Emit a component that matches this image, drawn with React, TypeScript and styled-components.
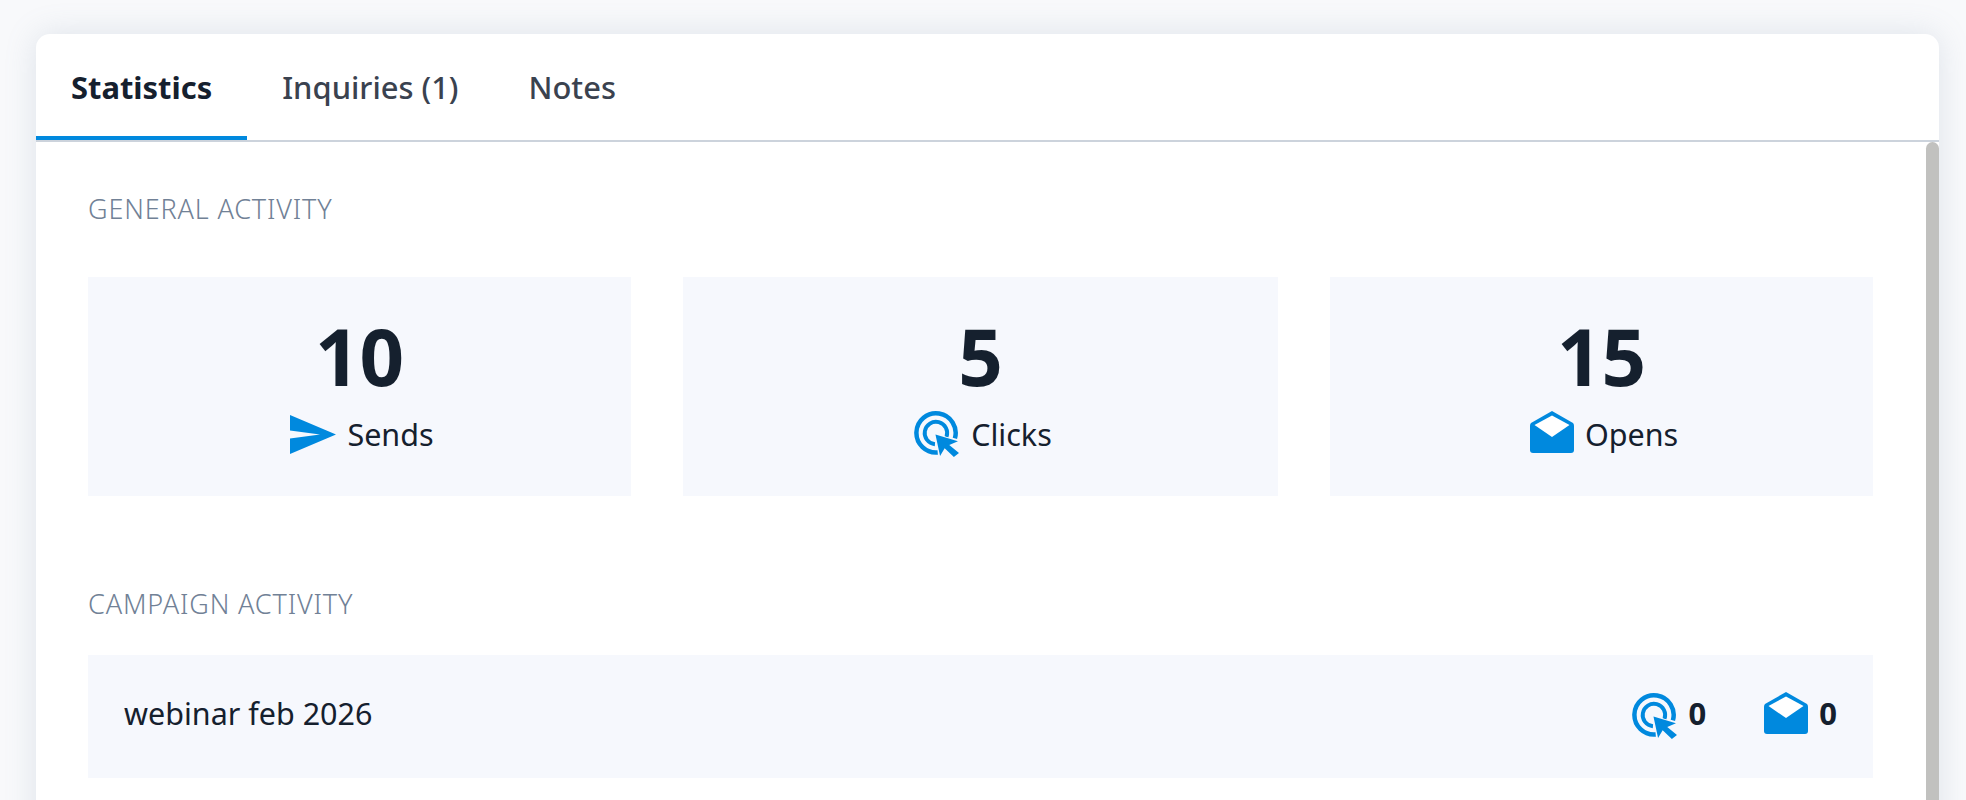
import React, { FunctionComponent } from "react";
import styled, { createGlobalStyle } from "styled-components";

const GlobalStyle = createGlobalStyle`
  html, body {
    margin: 0;
    height: 100%;
    overflow: hidden;
    background: #f8f9fb;
    font-family: "Noto Sans", "Open Sans", sans-serif;
  }
`;

const Page = styled.div`
  height: 800px;
  padding: 34px 27px 0 36px;
  box-sizing: border-box;
  overflow: hidden;
`;

const Card = styled.div`
  width: 1903px;
  height: 900px;
  background: #fff;
  border-radius: 14px 14px 0 0;
  box-shadow: 0 0 32px rgba(120, 140, 165, 0.2);
  display: flex;
  flex-direction: column;
`;

const Tabs = styled.div`
  display: flex;
  height: 106px;
  flex: none;
  border-bottom: 2px solid #ccd3dc;
`;

const Tab = styled.div<{ $active?: boolean }>`
  padding: 4px 35px 0;
  height: 106px;
  box-sizing: border-box;
  display: flex;
  align-items: center;
  font-size: 30.9px;
  font-weight: ${(p) => (p.$active ? 700 : 500)};
  color: ${(p) => (p.$active ? "#15202e" : "#3a424f")};
  border-bottom: 4px solid ${(p) => (p.$active ? "#0089de" : "transparent")};
`;

const Body = styled.div`
  flex: 1;
  display: flex;
  min-height: 0;
`;

const Content = styled.div`
  flex: 1;
  padding: 50px 53px 60px 52px;
`;

const ScrollThumb = styled.div`
  width: 13px;
  flex: none;
  background: #c1c1bf;
  border-radius: 7px 7px 0 0;
`;

const SectionLabel = styled.div`
  font-size: 27px;
  font-weight: 300;
  line-height: 34px;
  letter-spacing: 0.85px;
  color: #718196;
  text-transform: uppercase;
`;

const StatGrid = styled.div`
  display: grid;
  grid-template-columns: 543px 595px 543px;
  gap: 52px;
  margin: 51px 0 91px;
`;

const StatCard = styled.div`
  height: 219px;
  background: #f6f8fd;
  display: flex;
  flex-direction: column;
  align-items: center;
  padding-top: 29px;
  box-sizing: border-box;
`;

const StatValue = styled.div`
  font-size: 78px;
  line-height: 100px;
  font-weight: 700;
  color: #15202e;
`;

const StatLabel = styled.div`
  display: flex;
  align-items: center;
  gap: 11px;
  height: 44px;
  font-size: 30.5px;
  line-height: 44px;
  color: #15202e;
  margin-top: 6px;
  padding-left: 5px;
`;

const CampaignRow = styled.div`
  height: 123px;
  margin-top: 34px;
  padding: 0 36px;
  background: #f6f8fd;
  display: flex;
  align-items: center;
  justify-content: space-between;
`;

const CampaignName = styled.div`
  font-size: 30.5px;
  color: #15202e;
  margin-top: -7px;
`;

const Metrics = styled.div`
  display: flex;
  gap: 58px;
  margin-top: -2px;
`;

const Metric = styled.div`
  display: flex;
  align-items: center;
  gap: 11px;
`;

const MetricValue = styled.span`
  font-size: 31px;
  font-weight: 700;
  color: #15202e;
  margin-top: -5px;
`;

const EnvelopeSvg = styled.svg`
  margin-bottom: 5px;
`;

const BLUE = "#0089de";
const TINT = "#f6f8fd";

const SendIcon: FunctionComponent = () => (
  <svg width="46" height="39" viewBox="0 0 46 39">
    <path d="M0 0 L46 19.5 L0 39 L0 23.5 L30 19.5 L0 15.5 Z" fill={BLUE} />
  </svg>
);

const ClickIcon: FunctionComponent = () => (
  <svg width="46" height="46" viewBox="0 0 45 45" fill="none">
    <path d="M40 26.8 A19.2 19.2 0 1 0 23.2 40.6" stroke={BLUE} strokeWidth="4.4" />
    <path d="M31.8 25.3 A11 11 0 1 0 20.5 32.5" stroke={BLUE} strokeWidth="3.8" />
    <path
      d="M21 23 L43 29.5 L34.5 33.3 L44 41 L39 45 L30 36.5 L25.5 44 Z"
      fill={BLUE}
      stroke={TINT}
      strokeWidth="1.2"
      paintOrder="stroke"
    />
  </svg>
);

const OpenIcon: FunctionComponent = () => (
  <EnvelopeSvg width="44" height="42" viewBox="0 0 44 42">
    <path
      d="M22 0 L43 12 Q44 13 44 14.5 V39 a3 3 0 0 1 -3 3 H3 a3 3 0 0 1 -3 -3 V14.5 Q0 13 1 12 Z"
      fill={BLUE}
    />
    <path d="M22 4.5 L4.5 14 L22 26 L39.5 14 Z" fill="#fff" />
  </EnvelopeSvg>
);

const stats = [
  { value: 10, label: "Sends", icon: <SendIcon /> },
  { value: 5, label: "Clicks", icon: <ClickIcon /> },
  { value: 15, label: "Opens", icon: <OpenIcon /> },
];

const App: FunctionComponent = () => (
  <Page>
    <GlobalStyle />
    <Card>
      <Tabs>
        <Tab $active>Statistics</Tab>
        <Tab>Inquiries (1)</Tab>
        <Tab>Notes</Tab>
      </Tabs>
      <Body>
        <Content>
          <SectionLabel>General activity</SectionLabel>
          <StatGrid>
            {stats.map((s) => (
              <StatCard key={s.label}>
                <StatValue>{s.value}</StatValue>
                <StatLabel>
                  {s.icon}
                  {s.label}
                </StatLabel>
              </StatCard>
            ))}
          </StatGrid>
          <SectionLabel>Campaign activity</SectionLabel>
          <CampaignRow>
            <CampaignName>webinar feb 2026</CampaignName>
            <Metrics>
              <Metric>
                <ClickIcon />
                <MetricValue>0</MetricValue>
              </Metric>
              <Metric>
                <OpenIcon />
                <MetricValue>0</MetricValue>
              </Metric>
            </Metrics>
          </CampaignRow>
        </Content>
        <ScrollThumb />
      </Body>
    </Card>
  </Page>
);

export default App;
